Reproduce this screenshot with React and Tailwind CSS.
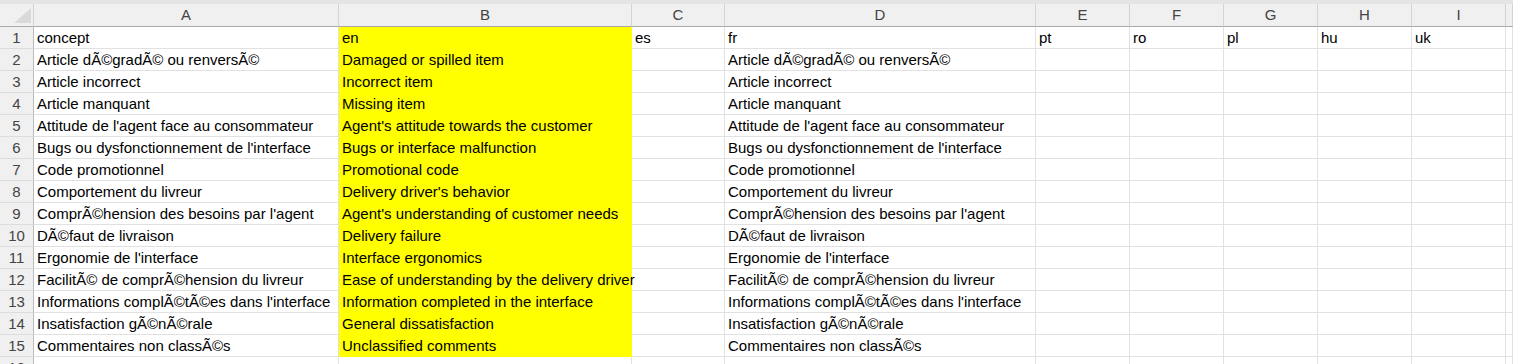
import React from "react";

const rows = [
  ["concept", "en", "es", "fr", "pt", "ro", "pl", "hu", "uk"],
  ["Article dÃ©gradÃ© ou renversÃ©", "Damaged or spilled item", "", "Article dÃ©gradÃ© ou renversÃ©"],
  ["Article incorrect", "Incorrect item", "", "Article incorrect"],
  ["Article manquant", "Missing item", "", "Article manquant"],
  ["Attitude de l'agent face au consommateur", "Agent's attitude towards the customer", "", "Attitude de l'agent face au consommateur"],
  ["Bugs ou dysfonctionnement de l'interface", "Bugs or interface malfunction", "", "Bugs ou dysfonctionnement de l'interface"],
  ["Code promotionnel", "Promotional code", "", "Code promotionnel"],
  ["Comportement du livreur", "Delivery driver's behavior", "", "Comportement du livreur"],
  ["Compr\u00c3\u00a9hension des besoins par l'agent", "Agent's understanding of customer needs", "", "Compr\u00c3\u00a9hension des besoins par l'agent"],
  ["D\u00c3\u00a9faut de livraison", "Delivery failure", "", "D\u00c3\u00a9faut de livraison"],
  ["Ergonomie de l'interface", "Interface ergonomics", "", "Ergonomie de l'interface"],
  ["Facilit\u00c3\u00a9 de compr\u00c3\u00a9hension du livreur", "Ease of understanding by the delivery driver", "", "Facilit\u00c3\u00a9 de compr\u00c3\u00a9hension du livreur"],
  ["Informations compl\u00c3\u00a9t\u00c3\u00a9es dans l'interface", "Information completed in the interface", "", "Informations compl\u00c3\u00a9t\u00c3\u00a9es dans l'interface"],
  ["Insatisfaction g\u00c3\u00a9n\u00c3\u00a9rale", "General dissatisfaction", "", "Insatisfaction g\u00c3\u00a9n\u00c3\u00a9rale"],
  ["Commentaires non class\u00c3\u00a9s", "Unclassified comments", "", "Commentaires non class\u00c3\u00a9s"],
  [],
];

const letters = ["A", "B", "C", "D", "E", "F", "G", "H", "I", ""];

export default function App() {
  return (
    <div
      className="w-[1513px] h-[364px] overflow-hidden bg-white text-[#000]"
      style={{ fontFamily: '"Liberation Sans", Arial, sans-serif' }}
    >
      <div className="h-[4px] bg-[#e4e4e4]" />
      <div className="grid grid-cols-[34px_305px_293px_93px_311px_94px_94px_94px_94px_94px_1fr]">
        {/* header row */}
        <div className="relative h-[23px] bg-[#f0f0f0] border-r border-r-[#d4d4d4] border-b border-b-[#a8a8a8]">
          <svg className="absolute left-[14px] top-[4px]" width="17" height="15" viewBox="0 0 17 15">
            <polygon points="17,0 17,15 0,15" fill="#d9d9d9" />
          </svg>
        </div>
        {letters.map((l, i) => (
          <div
            key={"h" + i}
            className="h-[23px] bg-[#f0f0f0] border-r border-r-[#d4d4d4] border-b border-b-[#a8a8a8] flex items-center justify-center pt-[1px] text-[15px] text-[#444]"
          >
            {l}
          </div>
        ))}
        {rows.map((r, ri) => (
          <React.Fragment key={"r" + ri}>
            <div className="h-[22px] bg-[#f0f0f0] border-r border-r-[#bcbcbc] border-b border-b-[#dcdcdc] flex items-center justify-center pt-[1px] text-[15px] text-[#444]">
              {ri + 1}
            </div>
            {Array.from({ length: 10 }).map((_, ci) => {
              const v = r[ci] || "";
              const yellow = ci === 1 && ri < 15;
              if (yellow) {
                return (
                  <div
                    key={ci}
                    className="relative z-10 h-[22px] bg-[#ffff00] border-r border-r-[#ffff00] border-b border-b-[#ffff00] flex items-center pl-[3px] pt-[1px] whitespace-nowrap text-[15px]"
                  >
                    {v}
                  </div>
                );
              }
              return (
                <div
                  key={ci}
                  className={
                    "h-[22px] border-r border-r-[#e1e1e1] border-b border-b-[#e1e1e1] flex items-center pl-[3px] pt-[1px] whitespace-nowrap text-[15px] " +
                    (ci === 0 ? "overflow-hidden" : "relative z-10")
                  }
                >
                  {v}
                </div>
              );
            })}
          </React.Fragment>
        ))}
      </div>
    </div>
  );
}
